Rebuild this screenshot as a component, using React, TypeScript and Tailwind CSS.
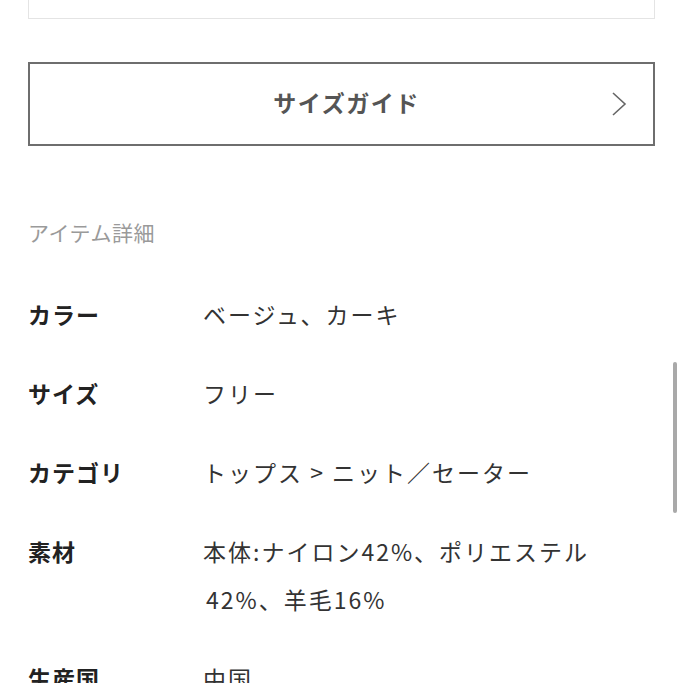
export default function App() {
  const rows: { label: string; value: string[] }[] = [
    { label: "カラー", value: ["ベージュ、カーキ"] },
    { label: "サイズ", value: ["フリー"] },
    { label: "カテゴリ", value: ["トップス > ニット／セーター"] },
    { label: "素材", value: ["本体:ナイロン42%、ポリエステル", "42%、羊毛16%"] },
    { label: "生産国", value: ["中国"] },
  ]

  return (
    <div
      className="relative w-[683px] h-[683px] overflow-hidden bg-white"
      style={{ fontFamily: '"Noto Sans CJK JP", "Noto Sans", sans-serif' }}
    >
      <div className="px-[28px]">
        <div className="h-[19px] border border-t-0 border-[#e4e4e4]" />

        <button className="mt-[43px] w-full h-[84px] border-2 border-[#6e6e6e] flex items-center justify-center relative">
          <span className="-mt-[3px] ml-[10px] text-[23px] font-bold text-[#555] leading-none tracking-[1.5px]">
            サイズガイド
          </span>
          <svg
            className="absolute right-[26px] top-1/2 -translate-y-1/2"
            width="16"
            height="26"
            viewBox="0 0 16 26"
            fill="none"
            stroke="#666"
            strokeWidth="1.6"
          >
            <path d="M2 2 L14 13 L2 24" />
          </svg>
        </button>

        <div className="mt-[71px] text-[21px] leading-[30px] text-[#9a9a9a] tracking-[0.5px]">アイテム詳細</div>

        <div className="mt-[43px] flex flex-col gap-[31px]">
          {rows.map((r) => (
            <div key={r.label} className="flex">
              <div className="w-[175px] shrink-0 text-[23px] leading-[48px] font-bold text-[#222] tracking-[1px]">
                {r.label}
              </div>
              <div className="text-[23px] leading-[48px] text-[#333] tracking-[2px]">
                {r.value.map((v, i) => (
                  <div key={v} className={i > 0 ? "pl-[3px]" : ""}>
                    {v}
                  </div>
                ))}
              </div>
            </div>
          ))}
        </div>
      </div>

      <div className="absolute left-[673px] top-[362px] w-[4px] h-[151px] rounded-full bg-[#a9a9a9]" />
    </div>
  )
}
